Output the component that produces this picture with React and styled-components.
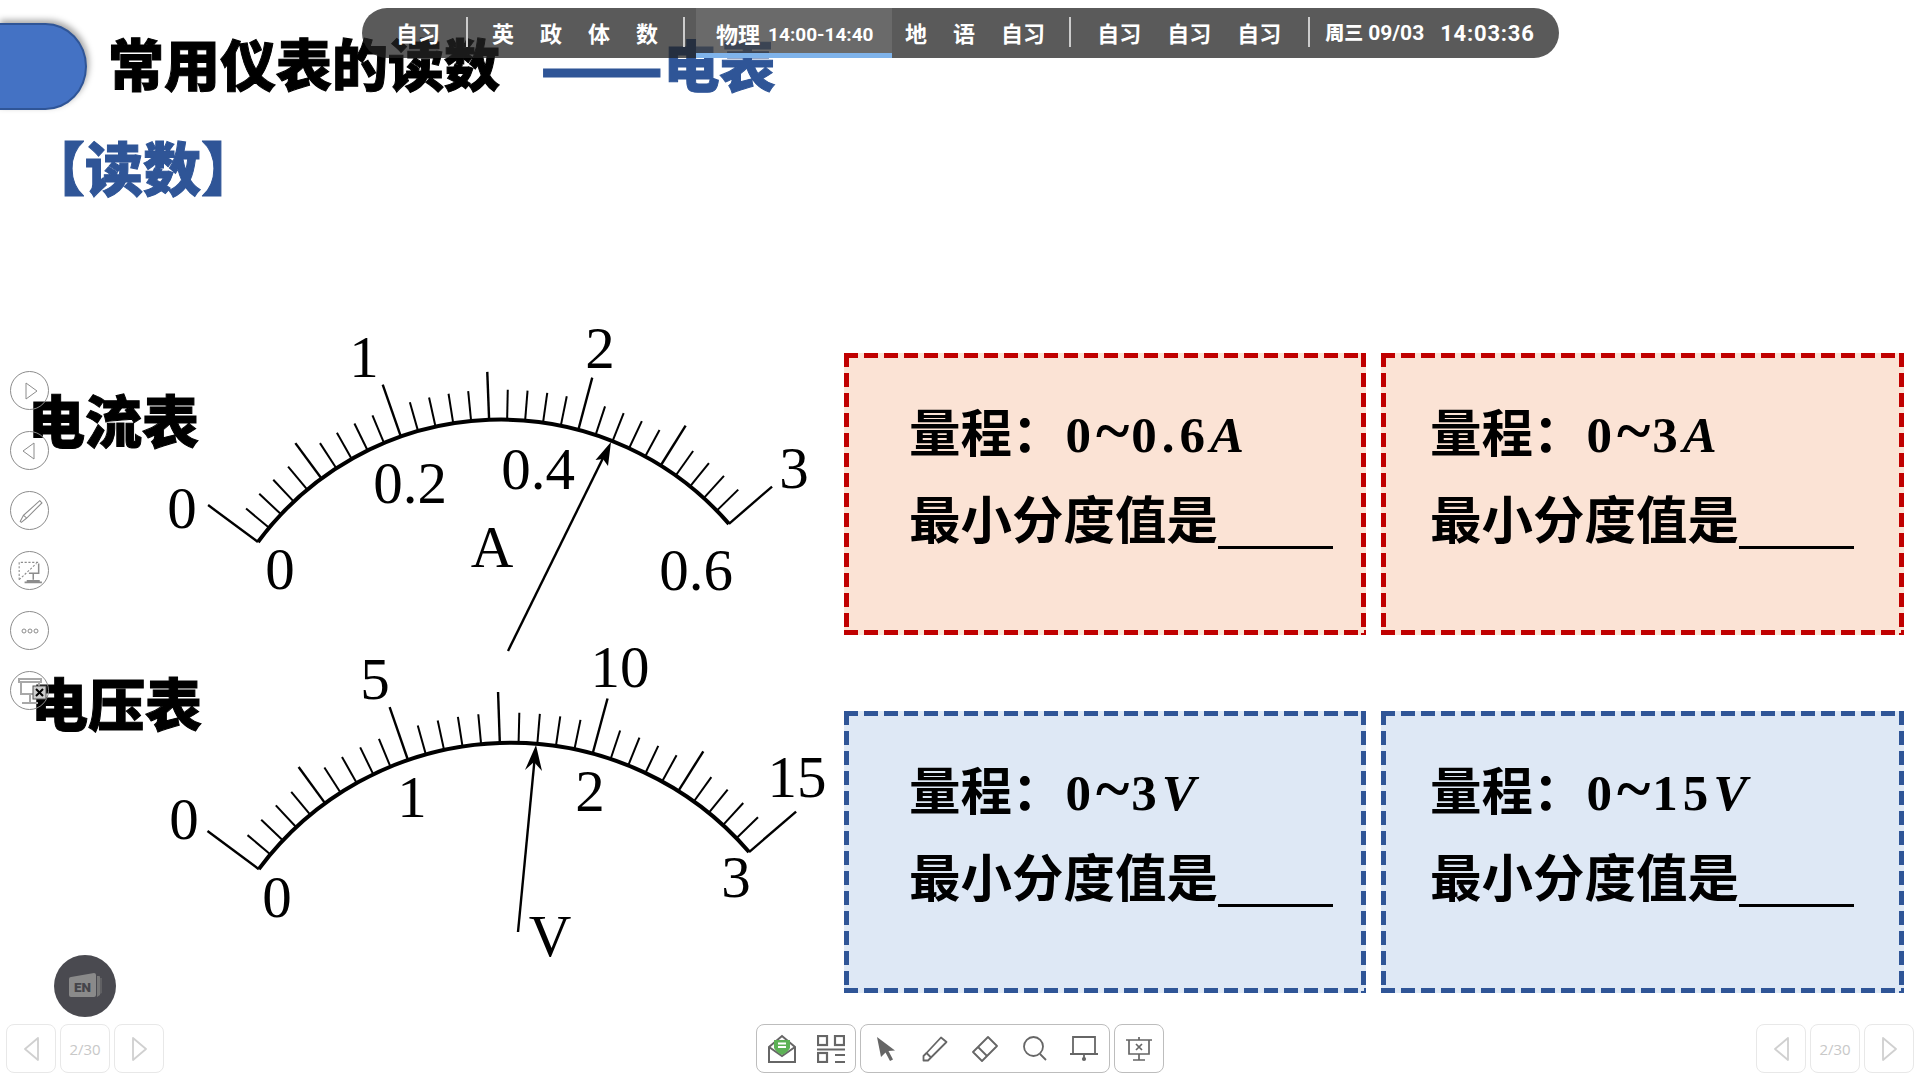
import React from "react";
import styled, { createGlobalStyle } from "styled-components";

const GlobalStyle = createGlobalStyle`
  html, body {
    margin: 0;
    background: #fff;
  }
`;

const CJK = `"Noto Sans CJK SC", "Noto Sans", sans-serif`;

const Slide = styled.div`
  position: relative;
  width: 1920px;
  height: 1080px;
  overflow: hidden;
  background: #fff;
  font-family: ${CJK};
  color: #000;
`;

const Header = styled.header`
  display: flex;
  align-items: flex-start;
  height: 87px;
  padding-top: 23px;
`;

const Tab = styled.div`
  flex: none;
  box-sizing: border-box;
  width: 89px;
  height: 87px;
  margin-left: -2px;
  background: #4472c4;
  border: 2px solid #2f5597;
  border-radius: 0 42px 42px 0 / 0 44px 44px 0;
  box-shadow: 2px -3px 6px rgba(0, 0, 0, 0.35);
`;

const Title = styled.h1`
  margin: -5px 0 0 21px;
  font-size: 56px;
  line-height: 87px;
  font-weight: 900;
  -webkit-text-stroke: 1px #000;
  white-space: nowrap;
`;

const TitleTail = styled.span`
  display: flex;
  align-items: baseline;
  margin: -11px 0 0 40px;
  font-size: 56px;
  line-height: 87px;
  font-weight: 900;
  -webkit-text-stroke: 1px #2f5597;
  color: #2f5597;
  white-space: nowrap;
`;

const TitleDash = styled.span`
  font-size: 72px;
  line-height: 87px;
  position: relative;
  top: 7px;
`;

const Section = styled.h2`
  margin: 27px 0 0 27px;
  font-size: 58px;
  line-height: 58px;
  font-weight: 900;
  -webkit-text-stroke: 1px #2f5597;
  color: #2f5597;
`;

const Body = styled.main`
  display: flex;
  margin-top: 125px;
`;

const GaugeColumn = styled.div`
  flex: none;
  width: 844px;
`;

const GaugePanel = styled.section`
  display: flex;
  align-items: flex-start;
  height: 320px;
  padding-left: ${({ $left }) => $left}px;
`;

const MeterName = styled.div`
  flex: none;
  width: 168px;
  margin-top: ${({ $top }) => $top}px;
  margin-right: ${({ $left }) => -($left + 8)}px;
  font-size: 57px;
  line-height: 56px;
  font-weight: 900;
  -webkit-text-stroke: 1px #000;
  white-space: nowrap;
`;

const GaugeSvg = styled.svg`
  display: block;
  flex: none;
  overflow: visible;
`;

const GaugeLabel = styled.text`
  font-family: "Liberation Serif", serif;
  font-size: 59px;
  text-anchor: middle;
  fill: #000;
`;

const CardGrid = styled.div`
  display: grid;
  grid-template-columns: 522px 523px;
  grid-auto-rows: 282px;
  column-gap: 15px;
  row-gap: 76px;
  padding-top: 33px;
`;

const dashes = (c) => `
  linear-gradient(90deg, ${c} 14px, transparent 14px) 0 0 / 20px 5px repeat-x,
  linear-gradient(90deg, ${c} 14px, transparent 14px) 0 100% / 20px 5px repeat-x,
  linear-gradient(180deg, ${c} 14px, transparent 14px) 0 0 / 5px 20px repeat-y,
  linear-gradient(180deg, ${c} 14px, transparent 14px) 100% 0 / 5px 20px repeat-y
`;

const Card = styled.article`
  box-sizing: border-box;
  padding: 47px 0 0 ${({ $inset }) => $inset}px;
  background: ${({ $line }) => dashes($line)}, ${({ $fill }) => $fill};
`;

const CardLine = styled.div`
  display: flex;
  align-items: baseline;
  height: 87px;
  font-size: 51.5px;
  line-height: 60px;
  font-weight: 700;
  white-space: nowrap;
`;

const Range = styled.span`
  margin-left: 2px;
  font-family: "Liberation Serif", serif;
  font-size: 51px;
  font-weight: 700;
  letter-spacing: 5px;

  i {
    font-style: italic;
  }
`;

const Tilde = styled.span`
  font-size: 64px;
  line-height: 40px;
  letter-spacing: 2px;
`;

const Blank = styled.span`
  align-self: flex-start;
  width: 115px;
  height: 59px;
  border-bottom: 3px solid #000;
`;

const ScheduleBar = styled.div`
  position: absolute;
  top: 8px;
  left: 362px;
  box-sizing: border-box;
  display: flex;
  align-items: center;
  width: 1197px;
  height: 50px;
  padding: 0 0 2px 34px;
  overflow: hidden;
  border-radius: 25px;
  background: rgba(35, 35, 35, 0.75);
  color: #fff;
  font-size: 22px;
  line-height: 30px;
  font-weight: 700;
  white-space: nowrap;
`;

const Subjects = styled.div`
  display: flex;
  gap: ${({ $gap }) => $gap}px;
`;

const BarRule = styled.span`
  flex: none;
  width: 2px;
  height: 30px;
  margin: ${({ $margin }) => $margin};
  background: #ccc;
`;

const Current = styled.div`
  box-sizing: border-box;
  display: flex;
  align-items: center;
  align-self: stretch;
  width: 196px;
  margin: 0 13px -2px 0;
  padding-left: 20px;
  padding-top: 5px;
  background: rgba(255, 255, 255, 0.1);
  border-bottom: 5px solid #7fb3ea;
`;

const Week = styled.span`
  font-size: 19px;
  font-weight: 900;
`;

const Time = styled.span`
  margin-left: ${({ $gap }) => $gap}px;
  padding-top: ${({ $drop }) => $drop || 0}px;
  font-family: Roboto, sans-serif;
  font-size: ${({ $size }) => $size}px;
  font-weight: 700;
  letter-spacing: ${({ $spacing }) => $spacing || 0}px;
`;

const SideTools = styled.nav`
  position: absolute;
  top: 371px;
  left: 10px;
  display: flex;
  flex-direction: column;
  gap: 21px;
`;

const SideButton = styled.div`
  box-sizing: border-box;
  display: flex;
  align-items: center;
  justify-content: center;
  width: 39px;
  height: 39px;
  border: 1px solid #8c8c8c;
  border-radius: 50%;
`;

const LangBadge = styled.div`
  position: absolute;
  top: 955px;
  left: 54px;
  display: flex;
  align-items: center;
  justify-content: center;
  width: 62px;
  height: 62px;
  border-radius: 50%;
  background: #4a4a50;
`;

const BottomBar = styled.footer`
  position: absolute;
  top: 1024px;
  left: 6px;
  right: 6px;
  display: flex;
  justify-content: space-between;
`;

const Pager = styled.div`
  display: flex;
  gap: 4px;
`;

const PagerButton = styled.div`
  box-sizing: border-box;
  display: flex;
  align-items: center;
  justify-content: center;
  width: 50px;
  height: 49px;
  border: 1px solid #e8e8e8;
  border-radius: 8px;
  font-family: "Open Sans", sans-serif;
  font-size: 15px;
  color: #c8c8c8;
`;

const ToolGroups = styled.div`
  display: flex;
  gap: 4px;
`;

const ToolGroup = styled.div`
  box-sizing: border-box;
  display: flex;
  width: ${({ $width }) => $width}px;
  height: 49px;
  border: 1px solid #bdbdbd;
  border-radius: 8px;
`;

const ToolButton = styled.div`
  flex: 1;
  display: flex;
  align-items: center;
  justify-content: center;
`;

const G = "#666";

const MailIcon = () => (
  <svg width="30" height="30" viewBox="0 0 30 30" fill="none">
    <path d="M2 13 15 2l13 11v15H2z" stroke={G} strokeWidth="2" />
    <path d="m2 13 13 9 13-9" stroke={G} strokeWidth="2" />
    <path d="M7 6h16v8q-3 5-8 7-5-2-8-7z" fill="#5cb155" />
    <path d="M11 9.500h8M11 13h8" stroke="#fff" strokeWidth="1.8" />
  </svg>
);

const GridIcon = () => (
  <svg width="28" height="28" viewBox="0 0 28 28" fill="none" stroke={G} strokeWidth="2.2">
    <rect x="1" y="1" width="9" height="9" />
    <rect x="18" y="1" width="9" height="9" />
    <path d="M0 14.500h28M18 20h10M18 27h10" />
    <rect x="1" y="18" width="9" height="9" />
  </svg>
);

const CursorIcon = () => (
  <svg width="18" height="24" viewBox="0 0 18 24">
    <path d="M0 0 18 13.500 11.500 14 16 22.500l-3 1.500-4.500-8.500L4 20z" fill={G} />
  </svg>
);

const PenIcon = () => (
  <svg width="26" height="26" viewBox="0 0 26 26" fill="none" stroke={G} strokeWidth="1.8">
    <path d="M19 1.500 24.500 6 9 21.500l-3 3H1.500V20l3-3z" strokeLinejoin="round" />
    <path d="m4.500 17 4.500 4.500" />
  </svg>
);

const EraserIcon = () => (
  <svg width="26" height="26" viewBox="0 0 26 26" fill="none" stroke={G} strokeWidth="1.8">
    <path d="M16 1 25 10 10 25 1 16z" strokeLinejoin="round" />
    <path d="m6 11 9 9" />
  </svg>
);

const SearchIcon = () => (
  <svg width="24" height="25" viewBox="0 0 24 25" fill="none" stroke={G} strokeWidth="1.8">
    <circle cx="10.500" cy="10.500" r="9.500" />
    <path d="m17 18 6 6" />
  </svg>
);

const BoardIcon = () => (
  <svg width="28" height="26" viewBox="0 0 28 26" fill="none" stroke={G} strokeWidth="1.8">
    <path d="M3 1h22v17H3zM0 18h28M14 18v5" />
    <circle cx="14" cy="23" r="1.2" fill={G} />
  </svg>
);

const ShowIcon = () => (
  <svg width="26" height="24" viewBox="0 0 26 24" fill="none" stroke={G} strokeWidth="1.7">
    <path d="M0 3h26M3 3v14h20V3M13 0v3M13 17v6M7 23h12" />
    <path d="m10 7 6 6M16 7l-6 6" />
  </svg>
);

const SideIcon = ({ children, size = 24 }) => (
  <svg width={size} height={size} viewBox="0 0 24 24" fill="none" stroke="#8c8c8c" strokeWidth="1">
    {children}
  </svg>
);

const PagerArrow = ({ flip }) => (
  <svg width="15" height="24" viewBox="0 0 15 24" fill="none" stroke="#d0d0d0" strokeWidth="1.8" strokeLinejoin="round">
    <path d={flip ? "M14 1 1 12l13 11z" : "M1 1l13 11L1 23z"} />
  </svg>
);

const ENIcon = () => (
  <svg width="34" height="26" viewBox="0 0 34 26">
    <path d="M29 3h2a1 1 0 0 1 1 1v18l-3 2z" fill="#777" />
    <path d="M32.500 5h1v15l-1 1z" fill="#777" />
    <path d="M3 4 26 0a2 2 0 0 1 2 2v20a2 2 0 0 1-2 2H3a2 2 0 0 1-2-2V6a2 2 0 0 1 2-2z" fill="#8a8a8a" />
    <text x="14.500" y="18.500" textAnchor="middle" fontFamily="Roboto, sans-serif" fontWeight="900" fontSize="13.5" fill="#45454a">EN</text>
  </svg>
);

const point = (g, r, deg) => {
  const a = (deg * Math.PI) / 180;
  return [g.cx + r * Math.sin(a), g.cy - r * Math.cos(a)];
};

const Gauge = ({ data }) => {
  const ticks = [];
  for (let i = 0; i <= 30; i += 1) {
    const angle = data.start + data.step * i;
    const [x1, y1] = point(data, data.r, angle);
    const [x2, y2] = point(data, data.r + (data.majors[i] || 30), angle);
    ticks.push(
      <line key={i} x1={x1} y1={y1} x2={x2} y2={y2} stroke="#000" strokeWidth={data.majors[i] ? 2.4 : 2} />
    );
  }
  const [ax, ay] = point(data, data.r, data.start);
  const [bx, by] = point(data, data.r, data.start + data.step * 30);
  return (
    <GaugeSvg width="680" height="320" viewBox={data.viewBox}>
      <path d={`M${ax} ${ay}A${data.r} ${data.r} 0 0 1 ${bx} ${by}`} fill="none" stroke="#000" strokeWidth="4" />
      {ticks}
      <path d={data.needle} fill="none" stroke="#000" strokeWidth="2.4" />
      <path d={data.head} fill="#000" />
      {data.labels.map(([text, x, y]) => (
        <GaugeLabel key={`${text}${x}`} x={x} y={y}>
          {text}
        </GaugeLabel>
      ))}
    </GaugeSvg>
  );
};

const ammeter = {
  viewBox: "160 320 680 320",
  cx: 500.7,
  cy: 721.6,
  r: 302,
  start: -53.5,
  step: 3.42,
  majors: { 0: 62, 5: 44, 10: 55, 15: 48, 20: 54, 25: 47, 30: 57 },
  needle: "M508 651 606 452",
  head: "M611 442 595.5 460 603 459 608 466z",
  labels: [
    ["1", 364, 377],
    ["2", 600, 368],
    ["3", 794, 488],
    ["0", 182, 528],
    ["0", 280, 589],
    ["0.2", 410, 503],
    ["0.4", 538, 489],
    ["A", 492, 567],
    ["0.6", 696, 590],
  ],
};

const voltmeter = {
  viewBox: "160 640 680 320",
  cx: 510.8,
  cy: 1057,
  r: 314.3,
  start: -53.3,
  step: 3.42,
  majors: { 0: 64, 5: 45, 10: 56, 15: 51, 20: 57, 25: 47, 30: 62 },
  needle: "M518 932 535 755",
  head: "M536 745 525 770 534 762 542 771z",
  labels: [
    ["5", 375, 699],
    ["10", 620, 687],
    ["15", 797, 797],
    ["0", 184, 839],
    ["0", 277, 917],
    ["1", 412, 817],
    ["2", 590, 811],
    ["3", 736, 897],
    ["V", 550, 956],
  ],
};

const red = { $line: "#c00000", $fill: "#fbe3d5" };
const blue = { $line: "#2f5597", $fill: "#dee8f5" };

const cards = [
  { colors: red, range: "0.6", unit: "A", inset: 65 },
  { colors: red, range: "3", unit: "A", inset: 49 },
  { colors: blue, range: "3", unit: "V", inset: 65 },
  { colors: blue, range: "15", unit: "V", inset: 49 },
];

export default function App() {
  return (
    <Slide>
      <GlobalStyle />
      <Header>
        <Tab />
        <Title>常用仪表的读数</Title>
        <TitleTail>
          <TitleDash>——</TitleDash>
          电表
        </TitleTail>
      </Header>
      <Section>【读数】</Section>

      <Body>
        <GaugeColumn>
          <GaugePanel $left={28}>
            <MeterName $left={28} $top={70}>电流表</MeterName>
            <Gauge data={ammeter} />
          </GaugePanel>
          <GaugePanel $left={31}>
            <MeterName $left={31} $top={33}>电压表</MeterName>
            <Gauge data={voltmeter} />
          </GaugePanel>
        </GaugeColumn>

        <CardGrid>
          {cards.map(({ colors, range, unit, inset }) => (
            <Card key={range + unit} {...colors} $inset={inset}>
              <CardLine>
                量程：
                <Range>
                  0<Tilde>~</Tilde>{range}
                  <i>{unit}</i>
                </Range>
              </CardLine>
              <CardLine>
                最小分度值是
                <Blank />
              </CardLine>
            </Card>
          ))}
        </CardGrid>
      </Body>

      <ScheduleBar>
        <span>自习</span>
        <BarRule $margin="0 24px 0 26px" />
        <Subjects $gap={26}>
          <span>英</span>
          <span>政</span>
          <span>体</span>
          <span>数</span>
        </Subjects>
        <BarRule $margin="0 11px 0 25px" />
        <Current>
          物理
          <Time $gap={8} $size={19} $drop={4}>14:00-14:40</Time>
        </Current>
        <Subjects $gap={26}>
          <span>地</span>
          <span>语</span>
          <span>自习</span>
        </Subjects>
        <BarRule $margin="0 26px 0 24px" />
        <Subjects $gap={26}>
          <span>自习</span>
          <span>自习</span>
          <span>自习</span>
        </Subjects>
        <BarRule $margin="0 15px 0 27px" />
        <Week>周三</Week>
        <Time $gap={5} $size={21} $drop={2}>09/03</Time>
        <Time $gap={16} $size={22} $spacing={0.8} $drop={3}>14:03:36</Time>
      </ScheduleBar>

      <SideTools>
        <SideButton>
          <SideIcon><path d="M8 4 19 12 8 20z" /></SideIcon>
        </SideButton>
        <SideButton>
          <SideIcon><path d="M16 4 5 12l11 8z" /></SideIcon>
        </SideButton>
        <SideButton>
          <SideIcon size={26}>
            <path d="M21 2.500 23 4.500 9 18.500l-3-2.500zM6 16l-3 5.500 1 1 5-4" />
          </SideIcon>
        </SideButton>
        <SideButton>
          <SideIcon size={26}>
            <path d="M2 20V4h18" strokeDasharray="2 1.500" />
            <path d="M2 20 18 5" strokeDasharray="2 1.500" />
            <path d="M20 5v9h-9M15 14v6M9 21h12M7 22.500h16" strokeWidth="1.4" />
          </SideIcon>
        </SideButton>
        <SideButton>
          <SideIcon>
            <circle cx="6" cy="12" r="2" />
            <circle cx="12" cy="12" r="2" />
            <circle cx="18" cy="12" r="2" />
          </SideIcon>
        </SideButton>
        <SideButton>
          <svg width="37" height="37" viewBox="0 0 37 37" fill="none">
            <path d="M8 7h22v3H8zM10 10v12h18V10M19 22v8M11 31h16" stroke="#a8a8a8" strokeWidth="2" />
            <rect x="22" y="14" width="13" height="13" fill="#ccc" stroke="#555" />
            <path d="m25 17 7 7M32 17l-7 7" stroke="#000" strokeWidth="2" />
          </svg>
        </SideButton>
      </SideTools>

      <LangBadge>
        <ENIcon />
      </LangBadge>

      <BottomBar>
        <Pager>
          <PagerButton><PagerArrow flip /></PagerButton>
          <PagerButton>2/30</PagerButton>
          <PagerButton><PagerArrow /></PagerButton>
        </Pager>
        <ToolGroups>
          <ToolGroup $width={100}>
            <ToolButton><MailIcon /></ToolButton>
            <ToolButton><GridIcon /></ToolButton>
          </ToolGroup>
          <ToolGroup $width={250}>
            <ToolButton><CursorIcon /></ToolButton>
            <ToolButton><PenIcon /></ToolButton>
            <ToolButton><EraserIcon /></ToolButton>
            <ToolButton><SearchIcon /></ToolButton>
            <ToolButton><BoardIcon /></ToolButton>
          </ToolGroup>
          <ToolGroup $width={50}>
            <ToolButton><ShowIcon /></ToolButton>
          </ToolGroup>
        </ToolGroups>
        <Pager>
          <PagerButton><PagerArrow flip /></PagerButton>
          <PagerButton>2/30</PagerButton>
          <PagerButton><PagerArrow /></PagerButton>
        </Pager>
      </BottomBar>
    </Slide>
  );
}
